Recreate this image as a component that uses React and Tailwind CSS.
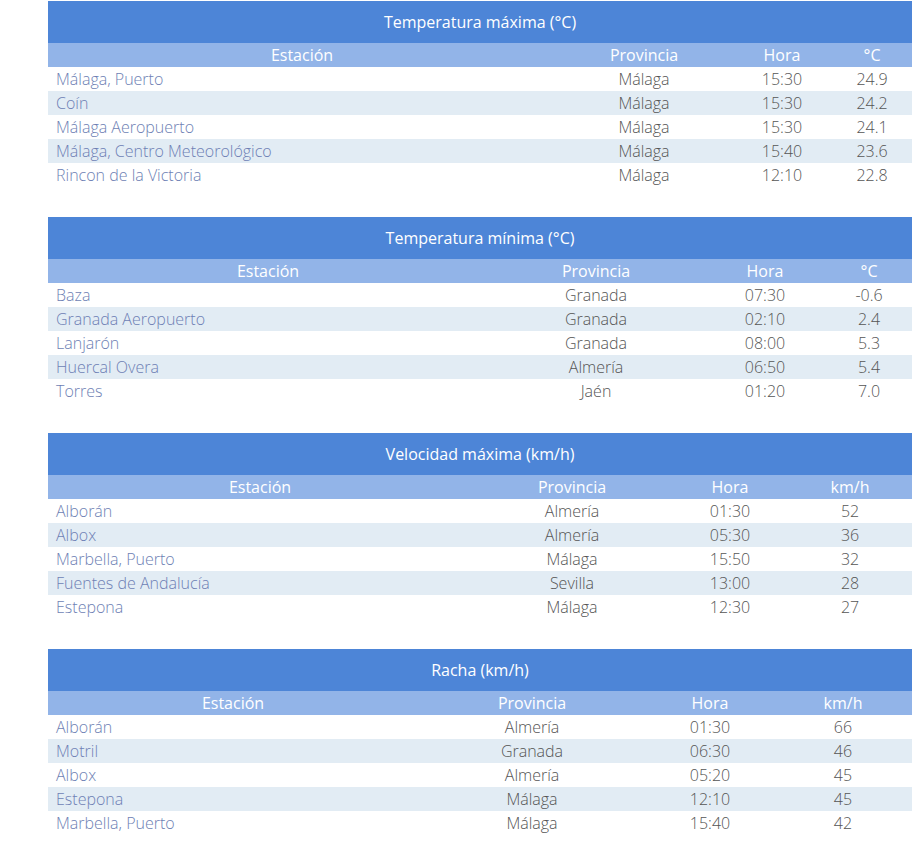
import React from 'react';

const tables = [
  {
    title: 'Temperatura máxima (°C)',
    unit: '°C',
    cols: ['w-[508px]', 'w-[176px]', 'w-[100px]', 'w-[80px]'],
    rows: [
      ['Málaga, Puerto', 'Málaga', '15:30', '24.9'],
      ['Coín', 'Málaga', '15:30', '24.2'],
      ['Málaga Aeropuerto', 'Málaga', '15:30', '24.1'],
      ['Málaga, Centro Meteorológico', 'Málaga', '15:40', '23.6'],
      ['Rincon de la Victoria', 'Málaga', '12:10', '22.8'],
    ],
  },
  {
    title: 'Temperatura mínima (°C)',
    unit: '°C',
    cols: ['w-[440px]', 'w-[216px]', 'w-[122px]', 'w-[86px]'],
    rows: [
      ['Baza', 'Granada', '07:30', '-0.6'],
      ['Granada Aeropuerto', 'Granada', '02:10', '2.4'],
      ['Lanjarón', 'Granada', '08:00', '5.3'],
      ['Huercal Overa', 'Almería', '06:50', '5.4'],
      ['Torres', 'Jaén', '01:20', '7.0'],
    ],
  },
  {
    title: 'Velocidad máxima (km/h)',
    unit: 'km/h',
    cols: ['w-[424px]', 'w-[200px]', 'w-[116px]', 'w-[124px]'],
    rows: [
      ['Alborán', 'Almería', '01:30', '52'],
      ['Albox', 'Almería', '05:30', '36'],
      ['Marbella, Puerto', 'Málaga', '15:50', '32'],
      ['Fuentes de Andalucía', 'Sevilla', '13:00', '28'],
      ['Estepona', 'Málaga', '12:30', '27'],
    ],
  },
  {
    title: 'Racha (km/h)',
    unit: 'km/h',
    cols: ['w-[370px]', 'w-[228px]', 'w-[128px]', 'w-[138px]'],
    rows: [
      ['Alborán', 'Almería', '01:30', '66'],
      ['Motril', 'Granada', '06:30', '46'],
      ['Albox', 'Almería', '05:20', '45'],
      ['Estepona', 'Málaga', '12:10', '45'],
      ['Marbella, Puerto', 'Málaga', '15:40', '42'],
    ],
  },
];

const RankTable = ({ title, unit, cols, rows }) => (
  <table className="w-[864px] table-fixed border-collapse">
    <colgroup>
      {cols.map((c, i) => (
        <col key={i} className={c} />
      ))}
    </colgroup>
    <thead>
      <tr className="bg-[#4d85d7]">
        <th colSpan={4} className="h-[42px] p-0 text-center text-[16px] font-normal text-white">
          {title}
        </th>
      </tr>
      <tr className="bg-[#92b4e8]">
        {['Estación', 'Provincia', 'Hora', unit].map((h) => (
          <th key={h} className="h-6 p-0 text-center text-[16px] font-normal leading-6 text-white">
            {h}
          </th>
        ))}
      </tr>
    </thead>
    <tbody>
      {rows.map((r, i) => (
        <tr key={i} className={i % 2 === 1 ? 'bg-[#e2ecf4]' : 'bg-white'}>
          <td className="h-6 p-0 pl-2 text-left text-[16px] font-light leading-6 text-[#6e7fb4]">
            {r[0]}
          </td>
          <td className="h-6 p-0 text-center text-[16px] font-light leading-6 text-[#555]">{r[1]}</td>
          <td className="h-6 p-0 text-center text-[16px] font-light leading-6 text-[#555]">{r[2]}</td>
          <td className="h-6 p-0 text-center text-[16px] font-light leading-6 text-[#555]">{r[3]}</td>
        </tr>
      ))}
    </tbody>
  </table>
);

export default function App() {
  return (
    <div className="min-h-[851px] w-[920px] bg-white pt-px pl-12 font-['Open_Sans',sans-serif]">
      <div className="flex flex-col gap-[30px]">
        {tables.map((t) => (
          <RankTable key={t.title} {...t} />
        ))}
      </div>
    </div>
  );
}
